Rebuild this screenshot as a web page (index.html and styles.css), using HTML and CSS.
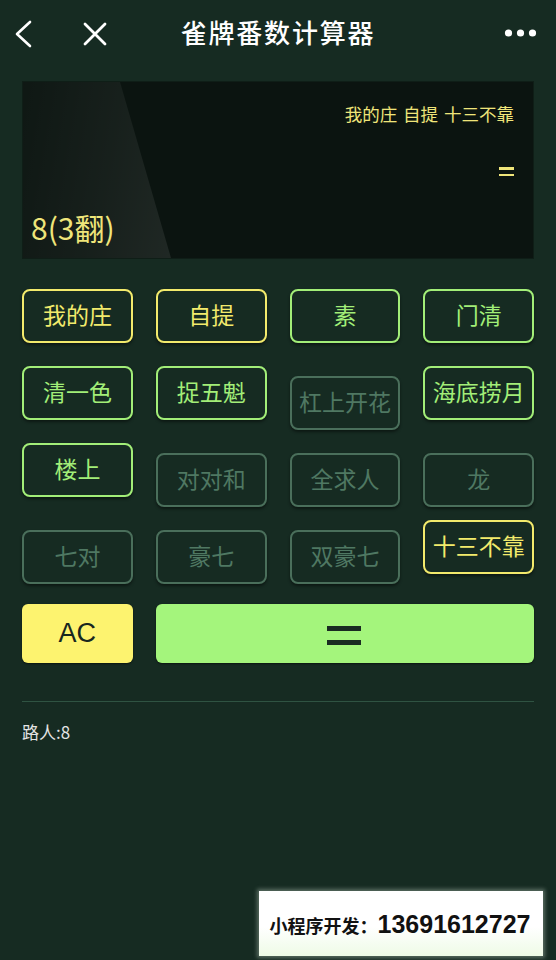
FILE: index.html
```html
<!DOCTYPE html>
<html lang="zh">
<head>
<meta charset="utf-8">
<title>雀牌番数计算器</title>
<link rel="stylesheet" href="styles.css">
</head>
<body>
<div class="page">
  <header class="nav">
    <svg class="nav-icon back" width="24" height="30" viewBox="0 0 24 30"><path d="M17 3 L4 15 L17 27" fill="none" stroke="#fff" stroke-width="2.6" stroke-linecap="round" stroke-linejoin="round"/></svg>
    <svg class="nav-icon close" width="26" height="26" viewBox="0 0 26 26"><path d="M3 3 L23 23 M23 3 L3 23" fill="none" stroke="#fff" stroke-width="2.8" stroke-linecap="round"/></svg>
    <h1 class="title">雀牌番数计算器</h1>
    <svg class="nav-icon more" width="36" height="10" viewBox="0 0 36 10"><circle cx="4.5" cy="5" r="3.6" fill="#fff"/><circle cx="16.5" cy="5" r="3.6" fill="#fff"/><circle cx="28.5" cy="5" r="3.6" fill="#fff"/></svg>
  </header>

  <section class="display">
    <div class="sheen"></div>
    <div class="expr">我的庄 自提 十三不靠</div>
    <div class="eq-line"><span class="mini-eq"><i></i><i></i></span></div>
    <div class="result">8(3翻)</div>
  </section>

  <section class="keys">
    <button class="key yellow">我的庄</button>
    <button class="key yellow">自提</button>
    <button class="key green">素</button>
    <button class="key green">门清</button>

    <button class="key green">清一色</button>
    <button class="key green">捉五魁</button>
    <button class="key off">杠上开花</button>
    <button class="key green">海底捞月</button>

    <button class="key green">楼上</button>
    <button class="key off">对对和</button>
    <button class="key off">全求人</button>
    <button class="key off">龙</button>

    <button class="key off">七对</button>
    <button class="key off">豪七</button>
    <button class="key off">双豪七</button>
    <button class="key yellow">十三不靠</button>
  </section>

  <section class="actions">
    <button class="ac">AC</button>
    <button class="equals"><span class="big-eq"><i></i><i></i></span></button>
  </section>

  <hr class="divider">

  <p class="history">路人:8</p>

  <div class="promo"><span class="promo-label">小程序开发：</span><span class="promo-num">13691612727</span></div>
</div>
</body>
</html>
```

FILE: styles.css
```css
* { box-sizing: border-box; }
html, body { margin: 0; padding: 0; }
body {
  background: #162b22;
  font-family: "Noto Sans CJK SC", "Noto Sans", sans-serif;
  width: 556px;
  height: 960px;
  overflow: hidden;
}
.page {
  position: relative;
  width: 556px;
  height: 960px;
}
.nav {
  height: 68px;
  display: flex;
  align-items: center;
  position: relative;
  padding: 0 16px 0 13px;
}
.nav-icon { display: block; }
.back { margin-right: 45px; }
.title {
  position: absolute;
  left: 0;
  right: 0;
  top: 0;
  height: 68px;
  margin: 0;
  display: flex;
  align-items: center;
  justify-content: center;
  color: #fff;
  font-size: 26px;
  font-weight: 500;
  letter-spacing: 1.8px;
  padding: 0 0 5px 0;
  pointer-events: none;
}
.more { margin-left: auto; position: relative; top: -1px; }

.display {
  position: relative;
  margin: 13px 22px 0;
  height: 178px;
  background: #0b1410;
  border: 1px solid #0f1e17;
  padding: 20px 19px 0 8px;
  overflow: hidden;
}
.sheen {
  position: absolute;
  left: 0; top: 0; bottom: 0;
  width: 150px;
  clip-path: polygon(0 0, 97px 0, 148px 100%, 0 100%);
  background: linear-gradient(100deg, rgba(255,255,255,0.015) 0%, rgba(255,255,255,0.05) 55%, rgba(255,255,255,0.085) 100%);
}
.expr {
  position: relative;
  text-align: right;
  color: #efe57a;
  font-size: 17.5px;
  line-height: 24px;
  word-spacing: 2px;
}
.eq-line {
  display: flex;
  justify-content: flex-end;
  margin-top: 41px;
}
.mini-eq {
  display: flex;
  flex-direction: column;
  gap: 4px;
  width: 15px;
}
.mini-eq i {
  display: block;
  height: 2.5px;
  background: #efe57a;
}
.result {
  position: relative;
  margin-top: 33px;
  color: #efe57a;
  font-size: 30px;
  line-height: 36px;
}

.keys {
  display: grid;
  grid-template-columns: repeat(4, 1fr);
  grid-auto-rows: 54px;
  column-gap: 23px;
  row-gap: 23px;
  padding: 0 22px;
  margin-top: 30px;
}
.key {
  height: 54px;
  align-self: start;
  background: #162b22;
  border: 2px solid;
  border-radius: 8px;
  font-family: "Noto Sans CJK SC", sans-serif;
  font-size: 23px;
  padding: 0 0 4px 0;
  box-shadow: 0 2px 3px rgba(0,0,0,0.45);
}
.yellow { border-color: #f2ea6c; color: #f2ea6c; }
.green { border-color: #a2ee78; color: #a2ee78; }
.off {
  border-color: #4a6f5b;
  color: #4f7862;
  margin-top: 10px;
}

.actions {
  display: grid;
  grid-template-columns: repeat(4, 1fr);
  column-gap: 23px;
  padding: 0 22px;
  margin-top: 30px;
}
.ac, .equals {
  height: 59px;
  border: none;
  border-radius: 6px;
  padding: 0;
  box-shadow: 0 1px 2px rgba(0,0,0,0.5);
}
.ac {
  background: #fdf36f;
  color: #18271f;
  font-family: "Liberation Sans", "Noto Sans", sans-serif;
  font-size: 27px;
  padding-bottom: 1px;
}
.equals {
  grid-column: span 3;
  background: #a4f57c;
  display: flex;
  align-items: center;
  justify-content: center;
}
.big-eq {
  display: flex;
  flex-direction: column;
  gap: 9px;
  width: 34px;
  margin-left: -2px;
  margin-top: 4px;
}
.big-eq i {
  display: block;
  height: 5px;
  background: #1a2b22;
}

.divider {
  margin: 38px 22px 0;
  border: none;
  height: 1px;
  background: #2f5342;
}
.history {
  margin: 19px 22px 0;
  color: #e4e4e4;
  font-size: 17px;
  line-height: 22px;
}

.promo {
  position: absolute;
  left: 259px;
  top: 891px;
  width: 284px;
  height: 65px;
  background: linear-gradient(180deg, #ffffff 0%, #ffffff 55%, #eefbe6 100%);
  box-shadow: 0 0 4px 2px rgba(220,235,220,0.35);
  display: flex;
  align-items: center;
  justify-content: center;
  gap: 0;
  padding: 2px 2px 0 0;
  color: #111;
}
.promo-label {
  font-family: "Noto Sans CJK SC", sans-serif;
  font-weight: 700;
  font-size: 18px;
}
.promo-num {
  font-family: "Liberation Sans", Arial, sans-serif;
  font-weight: 700;
  font-size: 25px;
}
```
